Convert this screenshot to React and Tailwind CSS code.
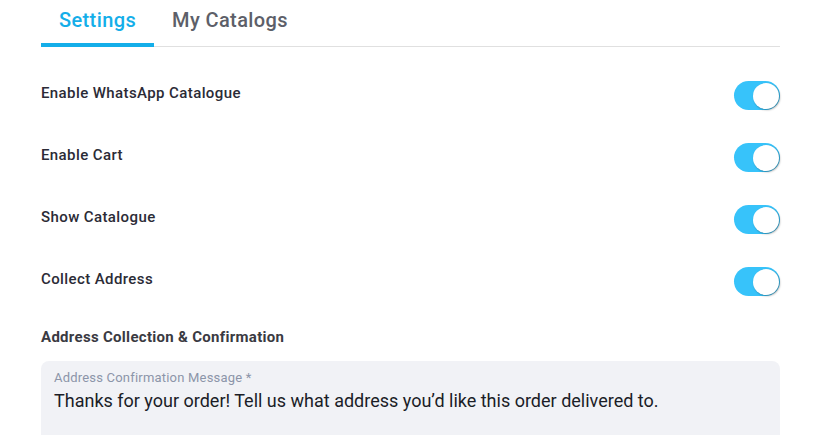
export default function App() {
  const rows = ['Enable WhatsApp Catalogue', 'Enable Cart', 'Show Catalogue', 'Collect Address']

  return (
    <div className="w-[826px] h-[435px] overflow-hidden bg-white font-['Roboto',sans-serif]">
      <div className="ml-[41px] w-[739px]">
        {/* tabs */}
        <div className="flex border-b border-[#e0e0e0] h-[47px]">
          <div className="w-[113px] flex justify-center border-b-4 border-[#14aee9] -mb-px">
            <span className="text-[20px] leading-[40px] font-medium text-[#14aee9] tracking-[0.4px]">Settings</span>
          </div>
          <div className="ml-[18px] px-0">
            <span className="text-[20px] leading-[40px] font-medium text-[#5d5f69] tracking-[0.4px]">My Catalogs</span>
          </div>
        </div>

        {/* toggles */}
        <div className="mt-[34px] flex flex-col gap-[33px]">
          {rows.map((label) => (
            <div key={label} className="flex items-center justify-between h-[29px]">
              <span className="text-[15px] font-medium text-[#2b2b36] tracking-[0.4px] mb-[5px]">{label}</span>
              <div className="w-[46px] h-[29px] rounded-full bg-[#37c3fa] flex items-center justify-end pr-[1px]">
                <div className="w-[26px] h-[26px] rounded-full bg-white shadow-[1px_1px_2px_rgba(0,0,0,0.35)]" />
              </div>
            </div>
          ))}
        </div>

        {/* address */}
        <div className="mt-[30px] text-[15px] font-bold text-[#3a3a42] tracking-[0.3px]">
          Address Collection &amp; Confirmation
        </div>
        <div className="mt-[12px] h-[90px] rounded-[8px] bg-[#f1f2f6] px-[13px] pt-[9px]">
          <div className="text-[13px] leading-[16px] text-[#8c95a9] tracking-[0.2px]">Address Confirmation Message *</div>
          <div className="mt-[2px] text-[18px] leading-[26px] text-[#1b1d27]">
            Thanks for your order! Tell us what address you’d like this order delivered to.
          </div>
        </div>
      </div>
    </div>
  )
}
